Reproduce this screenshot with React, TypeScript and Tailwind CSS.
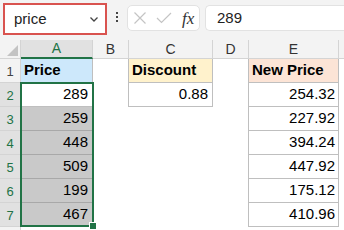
import React from "react";

const F = { fontFamily: '"Liberation Sans", Arial, sans-serif' };

type CellProps = {
  children?: React.ReactNode;
  className?: string;
};

function C({ children, className = "" }: CellProps) {
  return <div className={"flex overflow-hidden " + className}>{children}</div>;
}

export default function App() {
  const aVals = ["289", "259", "448", "509", "199", "467"];
  const eVals = ["254.32", "227.92", "394.24", "447.92", "175.12", "410.96"];

  return (
    <div className="w-[344px] h-[230px] overflow-hidden bg-white text-[#000]" style={F}>
      {/* Formula bar */}
      <div className="h-[40px] bg-[#f3f3f3] flex items-start pt-[3px] pl-[3px]">
        <div className="w-[104px] h-[32px] border-2 border-[#d9534f] bg-white">
          <div className="h-full flex items-center justify-between pl-[9px] pr-[5px] text-[15px] text-[#222]">
            <span>price</span>
            <svg width="12" height="12" viewBox="0 0 12 12" fill="none">
              <path d="M2.5 4.5 L6 8 L9.5 4.5" stroke="#444" strokeWidth="1.3" />
            </svg>
          </div>
        </div>
        <div className="ml-[9px] mt-[9px] flex flex-col gap-[2px]">
          <div className="w-[2px] h-[2px] bg-[#444]" />
          <div className="w-[2px] h-[2px] bg-[#444]" />
          <div className="w-[2px] h-[2px] bg-[#444]" />
        </div>
        <div className="ml-[9px] mt-[2px] w-[73px] h-[26px] bg-white border border-[#e2e2e2] rounded-[5px] flex items-center">
          <svg className="ml-[5px]" width="14" height="14" viewBox="0 0 14 14" fill="none">
            <path d="M1.5 1.5 L12.5 12.5 M12.5 1.5 L1.5 12.5" stroke="#c4c4c4" strokeWidth="1.2" />
          </svg>
          <svg className="ml-[9px]" width="16" height="14" viewBox="0 0 16 14" fill="none">
            <path d="M1 7 L5.5 11.5 L15 2" stroke="#c4c4c4" strokeWidth="1.2" />
          </svg>
          <span
            className="ml-[10px] text-[17px] italic text-[#333] leading-none"
            style={{ fontFamily: '"Liberation Serif", "Times New Roman", serif' }}
          >
            fx
          </span>
        </div>
        <div className="ml-[5px] mt-[2px] flex-1 h-[26px] bg-white border border-[#e2e2e2] rounded-l-[5px] border-r-0 flex items-center pl-[11px] text-[15px] text-[#222]">
          289
        </div>
      </div>

      {/* Grid */}
      <div className="relative grid grid-cols-[21px_72px_36px_84px_36px_90px_5px] grid-rows-[19px_24px_24px_24px_24px_24px_24px_24px_3px]">
        {/* Header row */}
        <div className="relative bg-[#f3f3f3] border-r border-b border-[#d4d4d4]">
          <svg className="absolute right-[2px] bottom-[2px]" width="11" height="11" viewBox="0 0 11 11">
            <path d="M11 0 L11 11 L0 11 Z" fill="#c3c3c3" />
          </svg>
        </div>
        <C className="items-center justify-center bg-[#e1e1e1] border-r border-[#d4d4d4] border-b-2 border-b-[#217346] text-[14px] text-[#217346]">A</C>
        <C className="items-center justify-center bg-[#f3f3f3] border-r border-b border-[#d4d4d4] text-[14px] text-[#333]">B</C>
        <C className="items-center justify-center bg-[#f3f3f3] border-r border-b border-[#d4d4d4] text-[14px] text-[#333]">C</C>
        <C className="items-center justify-center bg-[#f3f3f3] border-r border-b border-[#d4d4d4] text-[14px] text-[#333]">D</C>
        <C className="items-center justify-center bg-[#f3f3f3] border-r border-b border-[#d4d4d4] text-[14px] text-[#333]">E</C>
        <div className="bg-[#f3f3f3] border-b border-[#d4d4d4]" />

        {/* Row 1 */}
        <C className="items-center justify-center pt-[2px] bg-[#f3f3f3] border-r border-b border-[#d4d4d4] text-[13px] text-[#444]">1</C>
        <C className="items-end pb-[1px] bg-[#cde8fb] border-r border-b border-[#bfbfbf] pl-[3px] text-[15px] font-bold">Price</C>
        <div className="border-r border-[#bfbfbf]" />
        <C className="items-end pb-[1px] bg-[#fff2cc] border-r border-b border-[#bfbfbf] pl-[3px] text-[15px] font-bold">Discount</C>
        <div className="border-r border-[#bfbfbf]" />
        <C className="items-end pb-[1px] bg-[#fce4d6] border-r border-b border-[#bfbfbf] pl-[3px] text-[15px] font-bold">New Price</C>
        <div />

        {aVals.map((v, i) => (
          <React.Fragment key={i}>
            <C className="items-center justify-center pt-[2px] bg-[#e1e1e1] border-r border-b border-[#d4d4d4] text-[13px] text-[#217346]">
              {i + 2}
            </C>
            <C
              className={
                "items-end pb-[1px] justify-end pr-[4px] border-r border-b text-[15px] " +
                (i === 0 ? "bg-white border-[#bfbfbf]" : "bg-[#c9c9c9] border-[#a8a8a8]")
              }
            >
              {v}
            </C>
            <div className={i === 0 ? "border-r border-[#bfbfbf]" : ""} />
            {i === 0 ? (
              <C className="items-end pb-[1px] justify-end pr-[4px] border-r border-b border-[#bfbfbf] text-[15px]">0.88</C>
            ) : (
              <div />
            )}
            <div className="border-r border-[#bfbfbf]" />
            <C className="items-end pb-[1px] justify-end pr-[3px] border-r border-b border-[#bfbfbf] text-[15px]">{eVals[i]}</C>
            <div />
          </React.Fragment>
        ))}

        <div className="bg-[#f3f3f3] border-r border-[#d4d4d4]" />
        <div />
        <div />
        <div />
        <div />
        <div />
        <div />

        {/* Selection overlay */}
        <div className="absolute left-[20px] top-[42px] w-[74px] h-[145px] border-2 border-[#217346] pointer-events-none" />
        <div className="absolute left-[90px] top-[183px] w-[6px] h-[6px] bg-[#217346] outline outline-1 outline-white pointer-events-none" />
      </div>
    </div>
  );
}
